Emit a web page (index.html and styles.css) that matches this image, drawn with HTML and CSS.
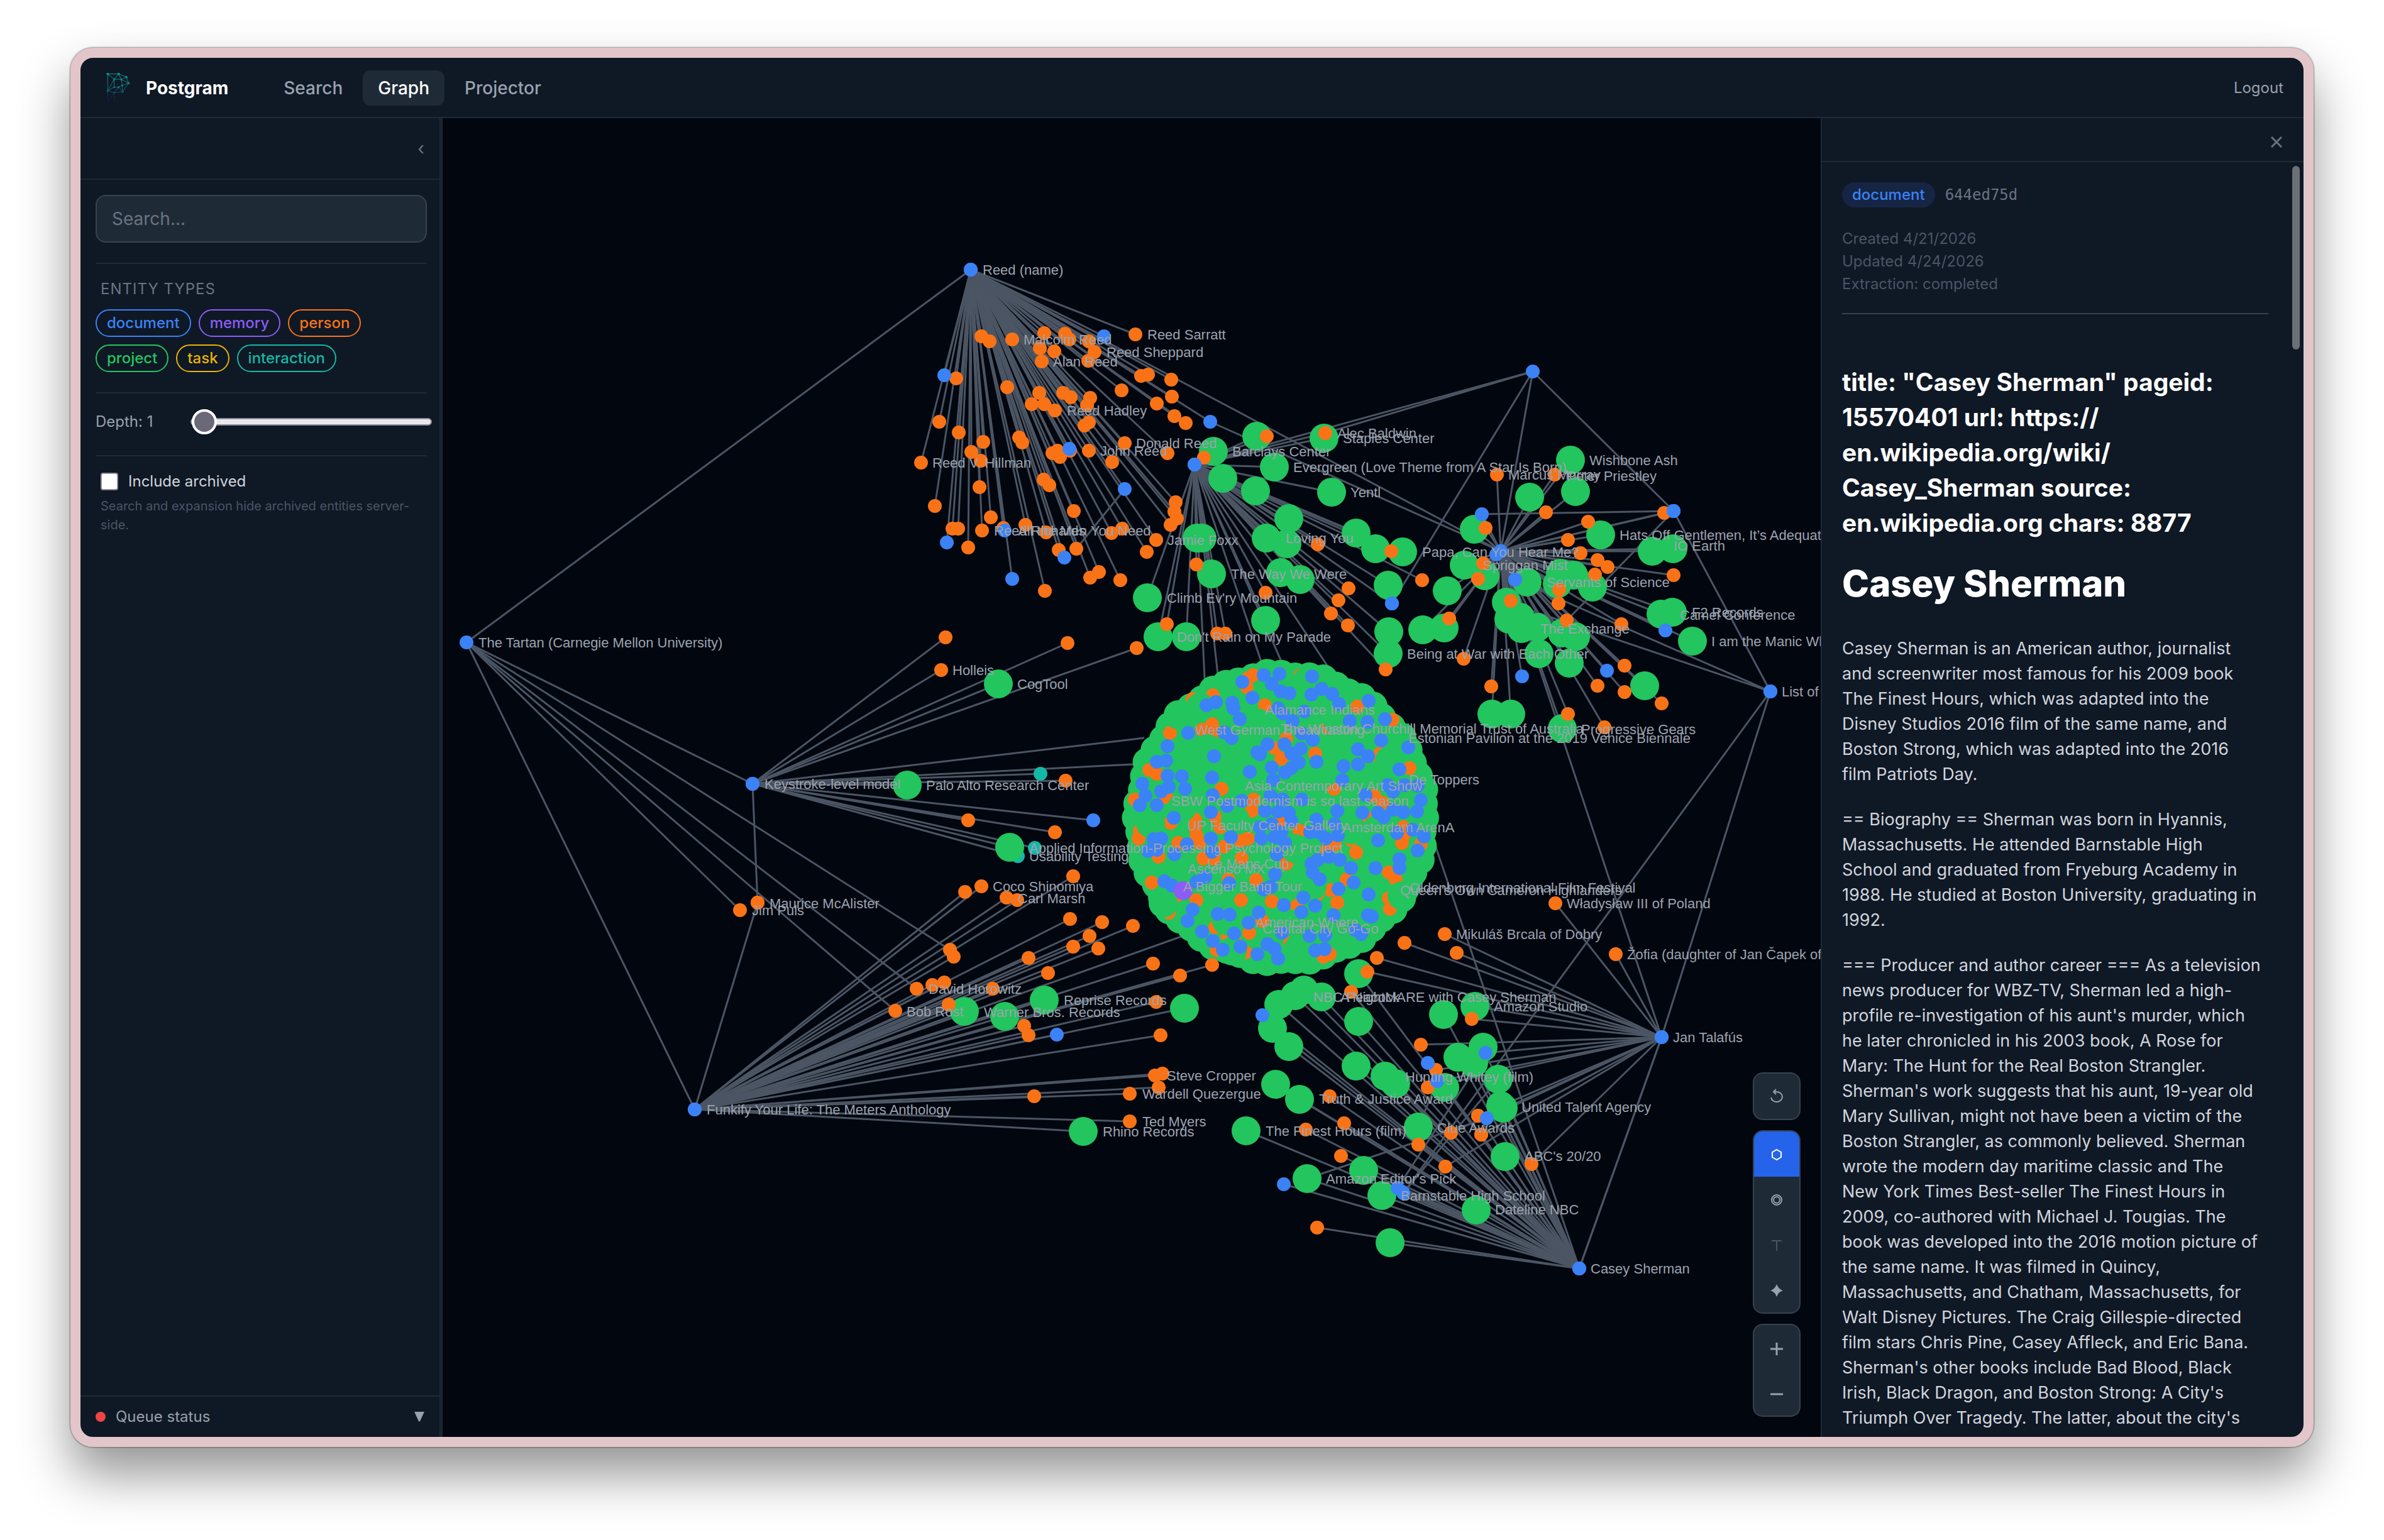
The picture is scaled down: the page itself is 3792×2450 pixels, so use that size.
FILE: index.html
```html
<!DOCTYPE html>
<html lang="en">
<head>
    <meta charset="UTF-8">
    <meta name="viewport" content="width=device-width, initial-scale=1.0">
    <title>Postgram - Graph</title>
    <link rel="stylesheet" href="styles.css">
</head>
<body>
    <div class="app">
        <header class="topbar">
            <a class="brand" href="#">
                <svg class="logo" viewBox="15 18 168 168" aria-hidden="true">
                    <defs>
                        <linearGradient id="fade" x1="0" y1="35" x2="0" y2="170" gradientUnits="userSpaceOnUse">
                            <stop offset="0" stop-color="#0f9488"/>
                            <stop offset="0.55" stop-color="#0e6f78"/>
                            <stop offset="0.75" stop-color="#0d2f56"/>
                            <stop offset="1" stop-color="#0f1b3d"/>
                        </linearGradient>
                    </defs>
                    <g fill="none" stroke="url(#fade)" stroke-width="3">
                        <path d="M49 35H101L138 50L148 79L120 120L80 124L49 115Z"/>
                        <path d="M49 35L80 60L101 35L114 62L138 50M114 62L148 79L118 90L120 120L101 98L80 98V60H114L118 90L101 98M80 98L49 115L80 60M101 98L80 124L82 166M49 115L50 170L80 124"/>
                    </g>
                    <g fill="url(#fade)">
                        <circle cx="49" cy="35" r="6"/><circle cx="101" cy="35" r="6"/>
                        <circle cx="138" cy="50" r="6"/><circle cx="148" cy="79" r="6"/>
                        <circle cx="114" cy="62" r="5"/><circle cx="80" cy="60" r="5"/>
                        <circle cx="118" cy="90" r="5"/><circle cx="101" cy="98" r="5"/>
                        <circle cx="80" cy="98" r="5"/><circle cx="120" cy="120" r="6"/>
                        <circle cx="80" cy="124" r="5"/><circle cx="49" cy="115" r="5"/>
                        <circle cx="50" cy="170" r="5"/><circle cx="82" cy="166" r="4"/>
                    </g>
                </svg>
                Postgram
            </a>
            <nav class="nav">
                <a href="#">Search</a>
                <a class="active" href="#">Graph</a>
                <a href="#">Projector</a>
            </nav>
            <button class="logout">Logout</button>
        </header>

        <div class="workspace">
            <aside class="sidebar">
                <div class="sidebar-head">
                    <button class="icon-btn" aria-label="Collapse sidebar">‹</button>
                </div>
                <div class="sidebar-body">
                    <input class="search" type="text" placeholder="Search..." aria-label="Search">

                    <section class="block">
                        <h2 class="block-title">Entity types</h2>
                        <div class="chips">
                            <button class="chip document">document</button>
                            <button class="chip memory">memory</button>
                            <button class="chip person">person</button>
                            <button class="chip project">project</button>
                            <button class="chip task">task</button>
                            <button class="chip interaction">interaction</button>
                        </div>
                    </section>

                    <section class="block depth">
                        <label for="depth">Depth: 1</label>
                        <input id="depth" type="range" min="1" max="5" value="1">
                    </section>

                    <section class="block">
                        <label class="check"><input type="checkbox"> Include archived</label>
                        <p class="hint">Search and expansion hide archived entities server-<br>side.</p>
                    </section>
                </div>
                <button class="queue">
                    <span class="queue-dot"></span>
                    Queue status
                    <svg class="queue-arrow" viewBox="0 0 16 16" aria-hidden="true"><path d="M1 0H15Q16 0 15.500 1L9 15Q8 16 7 15L.5 1Q0 0 1 0Z" fill="currentColor"/></svg>
                </button>
            </aside>

            <main class="canvas">
                <svg id="graph" class="graph" viewBox="704 188 2192 2098" preserveAspectRatio="xMidYMid slice"></svg>

                <div class="controls">
                    <div class="control-group">
                        <button aria-label="Reset layout">
                            <svg viewBox="0 0 20 24"><path d="M1 14A9 8 0 1 0 9 5H5M9 1L5 5L9 9" fill="none" stroke="currentColor" stroke-width="2"/></svg>
                        </button>
                    </div>
                    <div class="control-group">
                        <button class="active" aria-label="Force layout">
                            <svg viewBox="0 0 20 24"><path d="M10 5L17 9V17L10 21L3 17V9Z" fill="none" stroke="currentColor" stroke-width="2"/></svg>
                        </button>
                        <button aria-label="Circle layout">
                            <svg viewBox="0 0 20 24"><circle cx="10" cy="13" r="8" fill="none" stroke="currentColor" stroke-width="2"/><circle cx="10" cy="13" r="5" fill="none" stroke="currentColor" stroke-width="2"/></svg>
                        </button>
                        <button class="dim" aria-label="Tree layout">
                            <svg viewBox="0 0 20 24"><path d="M2 6H18M10 6V22" fill="none" stroke="currentColor" stroke-width="2"/></svg>
                        </button>
                        <button aria-label="Cluster layout">
                            <svg viewBox="0 0 20 24"><path d="M10 3Q13 11 20 13Q13 15 10 23Q7 15 0 13Q7 11 10 3Z" fill="currentColor"/></svg>
                        </button>
                    </div>
                    <div class="control-group">
                        <button aria-label="Zoom in">
                            <svg viewBox="0 0 20 24"><path d="M0 14H20M10 4V24" stroke="currentColor" stroke-width="3"/></svg>
                        </button>
                        <button aria-label="Zoom out">
                            <svg viewBox="0 0 20 24"><path d="M0 14H20" stroke="currentColor" stroke-width="3"/></svg>
                        </button>
                    </div>
                </div>
            </main>

            <aside class="detail">
                <div class="detail-head">
                    <button class="icon-btn" aria-label="Close">
                        <svg viewBox="0 0 18 18"><path d="M1 1L17 17M17 1L1 17" stroke="currentColor" stroke-width="3"/></svg>
                    </button>
                </div>
                <div class="detail-body">
                    <div class="entity">
                        <span class="badge">document</span>
                        <span class="entity-id">644ed75d</span>
                    </div>
                    <div class="meta">
                        <div>Created 4/21/2026</div>
                        <div>Updated 4/24/2026</div>
                        <div>Extraction: completed</div>
                    </div>
                    <article class="content">
                        <h2>title: "Casey Sherman" pageid:<br>15570401 url: https://<br>en.wikipedia.org/wiki/<br>Casey_Sherman source:<br>en.wikipedia.org chars: 8877</h2>
                        <h1>Casey Sherman</h1>
                        <p>Casey Sherman is an American author, journalist<br>
                        and screenwriter most famous for his 2009 book<br>
                        The Finest Hours, which was adapted into the<br>
                        Disney Studios 2016 film of the same name, and<br>
                        Boston Strong, which was adapted into the 2016<br>
                        film Patriots Day.</p>
                        <p>== Biography == Sherman was born in Hyannis,<br>
                        Massachusetts. He attended Barnstable High<br>
                        School and graduated from Fryeburg Academy in<br>
                        1988. He studied at Boston University, graduating in<br>
                        1992.</p>
                        <p>=== Producer and author career === As a television<br>
                        news producer for WBZ-TV, Sherman led a high-<br>
                        profile re-investigation of his aunt's murder, which<br>
                        he later chronicled in his 2003 book, A Rose for<br>
                        Mary: The Hunt for the Real Boston Strangler.<br>
                        Sherman's work suggests that his aunt, 19-year old<br>
                        Mary Sullivan, might not have been a victim of the<br>
                        Boston Strangler, as commonly believed. Sherman<br>
                        wrote the modern day maritime classic and The<br>
                        New York Times Best-seller The Finest Hours in<br>
                        2009, co-authored with Michael J. Tougias. The<br>
                        book was developed into the 2016 motion picture of<br>
                        the same name. It was filmed in Quincy,<br>
                        Massachusetts, and Chatham, Massachusetts, for<br>
                        Walt Disney Pictures. The Craig Gillespie-directed<br>
                        film stars Chris Pine, Casey Affleck, and Eric Bana.<br>
                        Sherman's other books include Bad Blood, Black<br>
                        Irish, Black Dragon, and Boston Strong: A City's<br>
                        Triumph Over Tragedy. The latter, about the city's</p>
                    </article>
                    <div class="scroll-thumb"></div>
                </div>
            </aside>
        </div>
    </div>

    <script src="graph.js"></script>
</body>
</html>
```
FILE: styles.css
```css
* {
    box-sizing: border-box;
}

body {
    margin: 0;
    height: 100vh;
    padding: 76px 112px 148px;
    background: #fff;
    font-family: Inter, "Noto Sans", sans-serif;
    font-size: 28px;
    line-height: 40px;
    color: #d1d5dc;
    overflow: hidden;
}

button,
input {
    font: inherit;
    color: inherit;
}

button {
    background: none;
    border: none;
    padding: 0;
    cursor: pointer;
}

a {
    color: inherit;
    text-decoration: none;
}

/* window frame */
.app {
    display: flex;
    flex-direction: column;
    height: 100%;
    border: 16px solid #e3c6ca;
    border-radius: 36px;
    background: #0f1825;
    overflow: hidden;
    box-shadow: 0 0 2px 1px rgba(0, 0, 0, 0.4), 0 44px 80px rgba(0, 0, 0, 0.42);
}

/* top bar */
.topbar {
    display: flex;
    align-items: center;
    flex: none;
    height: 96px;
    padding: 2px 32px 0;
    border-bottom: 2px solid #1f2a37;
}

.brand {
    display: flex;
    align-items: center;
    gap: 16px;
    font-weight: 700;
    color: #fff;
}

.logo {
    width: 56px;
    height: 56px;
}

.nav {
    display: flex;
    gap: 8px;
    flex: 1;
    margin-left: 64px;
}

.nav a {
    padding: 8px 24px;
    border-radius: 12px;
    font-weight: 500;
    color: #99a1af;
}

.nav a.active {
    background: #1f2a37;
    color: #fff;
}

.logout {
    font-size: 24px;
    color: #99a1af;
}

.workspace {
    display: flex;
    flex: 1;
    min-height: 0;
}

/* sidebar */
.sidebar {
    display: flex;
    flex-direction: column;
    flex: none;
    width: 576px;
    border-right: 5px double #1f2a37;
}

.sidebar-head {
    display: flex;
    align-items: center;
    justify-content: flex-end;
    flex: none;
    height: 98px;
    padding: 0 24px;
    border-bottom: 2px solid #1f2a37;
}

.icon-btn {
    display: flex;
    color: #6a7282;
}

.icon-btn svg {
    width: 18px;
    height: 18px;
}

.sidebar-body {
    flex: 1;
    padding: 24px 20px 24px 24px;
}

.search {
    display: block;
    width: 100%;
    height: 76px;
    padding: 0 24px;
    border: 2px solid #374250;
    border-radius: 16px;
    background: #1f2a37;
}

.search::placeholder {
    color: #6a7282;
    opacity: 1;
}

.block {
    margin-top: 32px;
    padding-top: 24px;
    border-top: 2px solid #1f2a37;
}

.block-title {
    margin: 0 8px 16px;
    font-size: 24px;
    line-height: 32px;
    font-weight: 400;
    letter-spacing: 1px;
    text-transform: uppercase;
    color: #6a7282;
}

.chips {
    display: flex;
    flex-wrap: wrap;
    gap: 12px;
}

.chip {
    height: 44px;
    padding: 0 16px;
    border: 2px solid currentColor;
    border-radius: 22px;
    font-size: 24px;
    font-weight: 500;
    line-height: 40px;
}

.chip.document { color: #3b82f6; }
.chip.memory { color: #8b5cf6; }
.chip.person { color: #f97316; }
.chip.project { color: #22c55e; }
.chip.task { color: #eab308; }
.chip.interaction { color: #14b8a6; }

.depth {
    display: flex;
    align-items: center;
    justify-content: space-between;
    height: 100px;
    padding: 0 0 8px;
    font-size: 24px;
    color: #99a1af;
}

.depth + .block {
    margin-top: 0;
}

.depth input {
    appearance: none;
    width: 384px;
    height: 40px;
    margin: 0 -8px 0 0;
    background: none;
}

.depth input::-webkit-slider-runnable-track {
    height: 12px;
    border: 2px solid #8f8d9c;
    border-radius: 6px;
    background: #e9e9ed;
}

.depth input::-webkit-slider-thumb {
    appearance: none;
    width: 40px;
    height: 40px;
    margin-top: -16px;
    border: 4px solid #fff;
    border-radius: 50%;
    background: #6b6878;
}

.check {
    display: flex;
    align-items: center;
    gap: 16px;
    margin: 0 8px;
    font-size: 24px;
    line-height: 32px;
}

.check input {
    appearance: none;
    width: 28px;
    height: 28px;
    margin: 0;
    border: 2px solid #8f8d9c;
    border-radius: 4px;
    background: #fff;
}

.hint {
    margin: 8px 8px 0;
    font-size: 20px;
    line-height: 30px;
    white-space: nowrap;
    color: #4a5565;
}

.queue {
    display: flex;
    align-items: center;
    gap: 16px;
    flex: none;
    height: 66px;
    padding: 0 24px;
    border-top: 2px solid #1f2a37;
    font-size: 24px;
    color: #99a1af;
}

.queue-dot {
    width: 16px;
    height: 16px;
    border-radius: 50%;
    background: #ef4444;
}

.queue-arrow {
    width: 16px;
    height: 16px;
    margin-left: auto;
}

/* graph */
.canvas {
    position: relative;
    flex: 1;
    min-width: 0;
    background: #02060f;
    overflow: hidden;
}

.graph {
    display: block;
    width: 100%;
    height: 100%;
}

.graph line {
    stroke: #4b5563;
    stroke-width: 3;
}

.graph .document { fill: #3b82f6; }
.graph .memory { fill: #8b5cf6; }
.graph .person { fill: #f97316; }
.graph .project { fill: #22c55e; }
.graph .interaction { fill: #14b8a6; }

.graph text {
    font-family: "Liberation Sans", Arial, sans-serif;
    font-size: 22px;
    fill: #9ca3af;
    dominant-baseline: central;
}

.controls {
    position: absolute;
    right: 32px;
    bottom: 32px;
    display: flex;
    flex-direction: column;
    gap: 16px;
}

.control-group {
    display: flex;
    flex-direction: column;
    width: 76px;
    border: 2px solid #374250;
    border-radius: 16px;
    background: #1f2a37;
    overflow: hidden;
}

.control-group button {
    display: flex;
    align-items: center;
    justify-content: center;
    height: 72px;
    color: #99a1af;
}

.control-group button.active {
    background: #2563eb;
    color: #fff;
}

.control-group button.dim {
    color: #4a5565;
}

.control-group svg {
    width: 20px;
    height: 24px;
}

/* detail panel */
.detail {
    display: flex;
    flex-direction: column;
    flex: none;
    width: 768px;
    border-left: 2px solid #1f2a37;
}

.detail-head {
    display: flex;
    align-items: center;
    justify-content: flex-end;
    flex: none;
    height: 70px;
    padding: 8px 34px 0;
    border-bottom: 2px solid #1f2a37;
}

.detail-body {
    position: relative;
    flex: 1;
    min-height: 0;
    padding: 32px 56px 0 32px;
    overflow: hidden;
}

.entity {
    display: flex;
    align-items: center;
    gap: 16px;
}

.badge {
    padding: 0 16px;
    border-radius: 20px;
    background: #162544;
    font-size: 24px;
    font-weight: 500;
    color: #3b82f6;
}

.entity-id {
    font-family: "DejaVu Sans Mono", monospace;
    font-size: 24px;
    color: #6a7282;
}

.meta {
    margin-top: 32px;
    padding-bottom: 28px;
    border-bottom: 2px solid #374250;
    font-size: 24px;
    line-height: 36px;
    color: #4a5565;
}

.content {
    white-space: nowrap;
    font-size: 27px;
}

.content h2 {
    margin: 80px 0 0;
    font-size: 39px;
    line-height: 56px;
    font-weight: 700;
    color: #fff;
}

.content h1 {
    margin: 32px 0 48px;
    font-size: 58px;
    line-height: 72px;
    font-weight: 800;
    color: #fff;
}

.content p {
    margin: 0 0 32px;
}

.scroll-thumb {
    position: absolute;
    top: 6px;
    right: 6px;
    width: 12px;
    height: 292px;
    border-radius: 6px;
    background: #6b6f78;
}
```
FILE: graph.js
```js
// Every group is a hub document plus the entities it links to.
// Node lists are "x y" pairs in graph space.
const groups = [
    {
        hub: [1544, 429],
        document: '1756 535, 1502 597, 1701 714, 1789 778, 1506 863, 1598 844, 1693 887, 1610 921, 1925 671',
        person: '1806 532, 1561 535, 1574 543, 1610 540, 1661 530, 1694 531, 1701 540, 1732 543, 1741 560, 1654 554, 1677 559, 1657 575, 1731 574, 1521 602, 1602 616, 1653 625, 1641 643, 1661 643, 1678 653, 1691 625, 1703 632, 1734 633, 1729 645, 1732 672, 1725 677, 1815 598, 1826 596, 1863 604, 1864 631, 1784 621, 1840 642, 1868 662, 1886 673, 1494 671, 1525 688, 1564 703, 1545 719, 1560 733, 1465 736, 1621 696, 1626 704, 1682 717, 1674 721, 1686 727, 1702 717, 1732 717, 1789 705, 1769 735, 1857 721, 1558 775, 1660 763, 1669 772, 1487 805, 1576 823, 1708 813, 1515 841, 1524 841, 1540 871, 1562 844, 1596 840, 1631 835, 1664 847, 1684 875, 1712 873, 1768 848, 1785 841, 1662 940, 1734 919, 1748 910, 1782 923, 1824 878, 1839 859, 1870 799, 1868 814, 1872 825, 1862 835',
        project: ''
    },
    {
        hub: [1900, 739],
        document: '2214 960',
        person: '1915 728, 2015 694, 2108 689, 1903 898, 1856 993, 2013 943, 1936 1008, 1949 1008, 2096 866, 2145 936, 2129 955, 2117 976, 2144 995, 2213 877, 2262 923, 2204 1065',
        project: '1930 718, 1999 694, 2106 697, 1945 761, 2027 743, 1997 781, 2118 783, 2050 825, 2014 856, 2047 865, 1904 856, 1912 856, 1927 913, 2037 911, 2068 922, 1825 951, 1842 1013, 1887 1013, 2013 987, 2157 848, 2188 873, 2231 878, 2208 931, 2209 1005, 2208 1040'
    },
    {
        hub: [2387, 877],
        document: '2380 882, 2357 818, 2410 922, 2421 1076, 2649 1003, 2556 1067, 2662 813',
        person: '2381 755, 2473 755, 2459 815, 2363 840, 2526 830, 2647 816, 2494 859, 2514 880, 2541 891, 2557 902, 2537 914, 2662 915, 2359 896, 2351 921, 2480 938, 2479 960, 2492 987, 2403 956, 2305 984, 2328 1048, 2372 1092, 2579 993, 2584 1059, 2541 1091, 2584 1101, 2643 1119, 2494 1136, 2552 1157',
        project: '2498 732, 2506 782, 2433 791, 2345 842, 2546 851, 2628 877, 2661 873, 2329 899, 2362 916, 2429 926, 2477 929, 2482 912, 2503 915, 2533 934, 2396 958, 2400 985, 2418 982, 2420 1000, 2445 998, 2485 1007, 2506 1013, 2302 940, 2263 1002, 2297 999, 2448 1040, 2496 1055, 2642 977, 2660 974, 2692 1020, 2616 1091, 2373 1136, 2403 1136, 2485 1159'
    },
    {
        hub: [1197, 1247],
        document: '1739 1305',
        person: '1504 1014, 1497 1066, 1698 1023, 1808 1031, 1695 1242, 1540 1305, 1678 1324, 1205 1436',
        interaction: '1655 1231, 1646 1349, 1619 1362',
        project: '1588 1088, 1443 1249, 1606 1348'
    },
    {
        hub: [1105, 1765],
        document: '1681 1646',
        person: '1707 1394, 1561 1410, 1535 1419, 1601 1428, 1618 1432, 1205 1436, 1702 1462, 1753 1467, 1733 1489, 1802 1473, 1707 1506, 1747 1509, 1636 1524, 1667 1548, 1579 1573, 1517 1522, 1483 1567, 1502 1563, 1509 1598, 1629 1632, 1636 1647, 1645 1744, 1797 1740, 1797 1784, 1834 1533, 1877 1552, 1928 1535, 1839 1594, 1846 1647, 1837 1711, 1849 1708, 1843 1730',
        project: '1534 1609, 1598 1617, 1661 1591, 1723 1800, 1884 1604'
    },
    {
        hub: [742, 1022],
        document: '1197 1247, 1105 1765, 1544 429',
        person: '1511 1511, 1458 1573, 1424 1608, 1177 1448'
    },
    {
        hub: [2643, 1650],
        document: '2363 1675, 2365 1779, 2286 1720, 2512 2018, 2387 877, 2816 1100',
        person: '2234 1500, 2298 1486, 2317 1516, 2570 1518, 2474 1437, 2190 1524, 2175 1546, 2341 1621, 2260 1662, 2284 1702, 2271 1730, 2351 1775, 2356 1805, 2308 1802, 2299 1856, 2436 1852',
        project: '2346 1601'
    },
    {
        hub: [2512, 2018],
        document: '2008 1615, 2271 1691, 2042 1884, 2223 1890, 2232 1898, 2643 1650',
        person: '2149 1578, 2115 1744, 2138 1787, 2077 1797, 2256 1821, 2133 1839, 2308 1802, 2351 1775, 2356 1805, 2095 1953',
        project: '2161 1549, 2074 1575, 2102 1586, 2060 1584, 2034 1598, 2024 1636, 2050 1665, 2161 1625, 2296 1614, 2319 1682, 2359 1666, 2344 1691, 2383 1717, 2298 1730, 2157 1696, 2203 1712, 2220 1724, 2029 1725, 2067 1749, 2387 1759, 2391 1763, 1982 1799, 2256 1793, 2169 1862, 2079 1875, 2198 1902, 2394 1840, 2348 1925, 2211 1977'
    },
    { hub: [2438, 591], document: '1900 739, 2387 877, 2214 960, 2662 813', person: '2108 689' },
    { hub: [2816, 1100], document: '2662 813, 2410 922, 2232 1898' }
];

const links = [
    [1544, 429, 2387, 877], [1925, 671, 2387, 877], [1712, 873, 1789, 778],
    [2357, 818, 2662, 813], [2662, 813, 2492, 987], [2079, 1875, 2365, 1779],
    [2223, 1890, 2363, 1675], [2232, 1898, 2383, 1717], [2241, 1222, 2512, 2018],
    [2816, 1100, 2396, 958],
    [1900, 739, 1917, 1100], [1900, 739, 1940, 1100], [1900, 739, 2012, 1070],
    [1900, 739, 2046, 1070], [1900, 739, 2125, 1080], [1197, 1247, 1820, 1174],
    [1197, 1247, 1820, 1215], [1105, 1765, 1890, 1486], [2256, 1793, 2286, 1720]
];

// the unexpanded ball in the middle
const ball = {
    cx: 2038,
    cy: 1301,
    r: 228,
    person: '1861 1166, 2012 1122, 1985 1079, 1993 1074, 1983 1093, 1929 1106, 1897 1112, 2159 1124, 1943 1255, 2122 1255, 1994 1272, 1991 1290, 1931 1163, 1912 1161, 2046 1175, 2027 1190, 2038 1207, 1959 1216, 1828 1225, 1840 1231, 2092 1199, 2242 1222, 1805 1272, 1855 1268, 1862 1309, 1813 1322, 1811 1334, 1901 1304, 1901 1316, 1903 1329, 1908 1341, 1874 1341, 1933 1300, 1941 1316, 1947 1347, 1973 1338, 1985 1334, 1975 1365, 1931 1366, 1914 1366, 1843 1363, 1832 1404, 1872 1424, 1903 1432, 1954 1399, 1998 1400, 1974 1432, 2023 1434, 2037 1306, 2067 1322, 2046 1374, 2111 1352, 2123 1343, 2149 1336, 2157 1356, 2186 1266, 2199 1277, 2172 1300, 2232 1316, 2234 1327, 2230 1341, 2260 1343, 2209 1388, 2220 1399, 2142 1399, 2117 1416, 2096 1422, 2127 1436, 2063 1441, 2209 1429, 2211 1446, 2008 1465, 1933 1475, 1952 1488, 1987 1484, 1966 1500, 1981 1515, 1935 1511, 1859 1452, 2052 1499, 2115 1518, 2105 1522, 2067 1474, 1928 1152, 2113 1157, 2142 1170, 2184 1216, 2195 1199, 2215 1145, 1864 1132, 2068 1075',
    // projects that sit above the people in the ball
    project: '1920 1191, 1882 1385, 1874 1137, 1909 1125, 2078 1085, 1983 1223, 1943 1211, 2172 1230, 2210 1210, 2146 1184, 1850 1437, 1951 1465, 2087 1410, 2230 1425, 2060 1470, 2065 1510, 1960 1513, 2128 1148, 1830 1310, 2005 1240, 2105 1230, 2000 1150, 1895 1215, 1965 1305, 2150 1320, 2190 1320, 2180 1405, 2060 1350, 1880 1285',
    document: '2010 1074, 2035 1072, 1976 1085, 2087 1076, 2023 1088, 2037 1100, 2051 1103, 1992 1110, 2086 1105, 2102 1096, 2119 1104, 2130 1120, 2177 1115, 1919 1122, 1934 1117, 1960 1118, 1962 1127, 1972 1144, 2033 1127, 2040 1135, 2075 1132, 2056 1147, 2147 1147, 2175 1149, 2203 1144, 1890 1166, 1857 1187, 1959 1174, 1947 1165, 1931 1203, 2016 1184, 2043 1184, 2069 1191, 2071 1167, 2088 1177, 2004 1200, 2000 1197, 2054 1199, 2066 1213, 2054 1222, 2044 1229, 2023 1221, 2094 1212, 2160 1192, 2176 1203, 2160 1216, 2137 1219, 2135 1241, 2197 1178, 2240 1189, 2226 1224, 1840 1212, 1855 1210, 1857 1234, 1880 1235, 1885 1255, 1817 1247, 1859 1252, 1847 1259, 1822 1266, 1813 1281, 1840 1281, 1928 1237, 1988 1228, 2025 1241, 1929 1265, 1952 1282, 1926 1292, 1975 1274, 2021 1266, 2040 1272, 2012 1290, 2033 1291, 2050 1293, 2071 1272, 2127 1290, 2172 1265, 2207 1249, 2216 1259, 2234 1249, 2255 1250, 2260 1273, 2254 1291, 2232 1292, 2216 1288, 2192 1293, 2201 1300, 2167 1293, 1867 1301, 2054 1306, 2023 1311, 2004 1316, 2038 1324, 2094 1304, 2084 1324, 2098 1324, 2109 1334, 2128 1329, 2123 1311, 1835 1335, 1847 1334, 1888 1343, 1926 1334, 1958 1332, 2006 1334, 2027 1332, 2044 1341, 2192 1337, 2222 1325, 2247 1320, 2265 1331, 2255 1353, 1868 1359, 1826 1354, 1840 1352, 1928 1355, 2031 1359, 2086 1374, 2096 1368, 2113 1363, 2131 1368, 2226 1367, 2226 1381, 2188 1381, 2149 1381, 2088 1388, 2099 1399, 2028 1391, 1852 1402, 1864 1409, 1903 1403, 1917 1395, 1955 1405, 2153 1404, 2021 1411, 2010 1415, 2129 1414, 2073 1428, 2177 1423, 2042 1440, 2092 1441, 2070 1451, 1897 1447, 1889 1465, 1937 1454, 1956 1455, 2002 1452, 2121 1456, 2176 1456, 2182 1458, 1986 1468, 1963 1485, 1912 1482, 1929 1497, 1945 1511, 1973 1506, 2083 1489, 2108 1488, 2155 1479, 2165 1486, 2039 1484, 2016 1502, 2027 1509, 2000 1518, 2033 1525, 2092 1512, 2107 1510'
};

const labels = [
    [1563, 429, 'Reed (name)'],
    [1825, 532, 'Reed Sarratt'],
    [1628, 540, 'Malcolm Reed'],
    [1760, 560, 'Reed Sheppard'],
    [1675, 575, 'Alan Reed'],
    [1697, 653, 'Reed Hadley'],
    [1807, 705, 'Donald Reed'],
    [1750, 717, 'John Reed'],
    [1483, 736, 'Reed V. Hillman'],
    [1581, 844, 'Reed Richards'],
    [1619, 844, 'All the Men You Need'],
    [1857, 859, 'Jamie Foxx'],
    [1960, 718, 'Barclays Center'],
    [2127, 689, 'Alec Baldwin'],
    [2136, 697, 'Staples Center'],
    [2057, 743, 'Evergreen (Love Theme from A Star Is Born)'],
    [2148, 783, 'Yentl'],
    [2045, 856, 'Loving You'],
    [1958, 913, 'The Way We Were'],
    [1856, 951, "Climb Ev'ry Mountain"],
    [1872, 1013, "Don't Rain on My Parade"],
    [2262, 878, 'Papa, Can You Hear Me?'],
    [2238, 1040, 'Being at War with Each Other'],
    [2528, 732, 'Wishbone Ash'],
    [2399, 755, 'Marcus Murray'],
    [2492, 757, 'Peter Priestley'],
    [2576, 851, 'Hats Off Gentlemen, It’s Adequate'],
    [2662, 868, 'IO Earth'],
    [2359, 899, 'Spriggan Mist'],
    [2460, 926, 'Servants of Science'],
    [2450, 1000, 'The Exchange'],
    [2672, 978, 'Camel Conference'],
    [2691, 974, 'F2 Records'],
    [2722, 1020, 'I am the Manic Whale'],
    [2834, 1100, 'List of songs'],
    [2515, 1160, 'Progressive Gears'],
    [761, 1022, 'The Tartan (Carnegie Mellon University)'],
    [1515, 1066, 'Holleis'],
    [1618, 1088, 'CogTool'],
    [1216, 1247, 'Keystroke-level model'],
    [1473, 1249, 'Palo Alto Research Center'],
    [1637, 1349, 'Applied Information-Processing Psychology Project'],
    [1637, 1362, 'Usability Testing'],
    [1224, 1437, 'Maurice McAlister'],
    [1196, 1448, 'Jim Puls'],
    [1579, 1410, 'Coco Shinomiya'],
    [1619, 1429, 'Carl Marsh'],
    [1477, 1573, 'David Horowitz'],
    [1442, 1609, 'Bob Rost'],
    [1565, 1610, 'Warner Bros. Records'],
    [1692, 1591, 'Reprise Records'],
    [1124, 1765, 'Funkify Your Life: The Meters Anthology'],
    [1856, 1711, 'Steve Cropper'],
    [1817, 1740, 'Wardell Quezergue'],
    [1817, 1784, 'Ted Myers'],
    [1754, 1800, 'Rhino Records'],
    [2012, 1129, 'Alamance Indians'],
    [1901, 1161, 'West German Broadcasting'],
    [2037, 1159, 'The Winston Churchill Memorial Trust of Australia'],
    [2240, 1174, 'Estonian Pavilion at the 2019 Venice Biennale'],
    [2241, 1240, 'De Toppers'],
    [1980, 1250, 'Asia Contemporary Art Show'],
    [1863, 1274, 'SBW Postmodernism is so last season'],
    [1888, 1313, 'UP Faculty Center Gallery'],
    [2135, 1316, 'Amsterdam ArenA'],
    [1920, 1374, 'Le Mans Cup'],
    [1889, 1382, 'Ascenso MX'],
    [1882, 1410, 'A Bigger Bang Tour'],
    [2242, 1412, 'Oldenburg International Film Festival'],
    [2227, 1416, "Queen's Own Cameron Highlanders"],
    [1997, 1467, 'American Where'],
    [2008, 1477, 'Capital City Go-Go'],
    [2492, 1437, 'Władysław III of Poland'],
    [2316, 1486, 'Mikuláš Brcala of Dobry'],
    [2588, 1518, 'Žofia (daughter of Jan Čapek of Sány)'],
    [2661, 1650, 'Jan Talafús'],
    [2089, 1586, 'NBC Peacock'],
    [2132, 1586, 'A NightMARE with Casey Sherman'],
    [2376, 1601, 'Amazon Studio'],
    [2235, 1713, 'Hunting Whitey (film)'],
    [2098, 1748, 'Truth & Justice Award'],
    [2420, 1761, 'United Talent Agency'],
    [2013, 1799, 'The Finest Hours (film)'],
    [2286, 1794, 'Clue Awards'],
    [2425, 1839, "ABC's 20/20"],
    [2109, 1875, "Amazon Editor's Pick"],
    [2228, 1902, 'Barnstable High School'],
    [2378, 1924, 'Dateline NBC'],
    [2530, 2018, 'Casey Sherman']
];

const radius = { document: 11, person: 11, interaction: 11, memory: 15, project: 23 };
const svg = document.getElementById('graph');

function add(tag, attrs, text) {
    const el = document.createElementNS('http://www.w3.org/2000/svg', tag);
    for (const key in attrs) {
        el.setAttribute(key, attrs[key]);
    }
    if (text) {
        el.textContent = text;
    }
    svg.appendChild(el);
}

function points(list) {
    return list ? list.split(', ').map(p => p.split(' ').map(Number)) : [];
}

function drawNodes(type, list) {
    list.forEach(([cx, cy]) => add('circle', { class: type, cx, cy, r: radius[type] }));
}

// place a point of the ball by distance from its centre and angle
function onBall(dist, angle) {
    return [ball.cx + dist * Math.cos(angle), ball.cy + dist * Math.sin(angle)];
}

// edges
groups.forEach(group => {
    const [x1, y1] = group.hub;
    Object.keys(radius).forEach(type => {
        points(group[type]).forEach(([x2, y2]) => add('line', { x1, y1, x2, y2 }));
    });
});
links.forEach(([x1, y1, x2, y2]) => add('line', { x1, y1, x2, y2 }));

// filler projects of the ball: a sunflower spiral inside, a packed rim outside
const filler = [];
for (let i = 0; i < 320; i++) {
    filler.push(onBall(ball.r * Math.sqrt(i / 320), i * 2.39996));
}
for (let i = 0; i < 64; i++) {
    filler.push(onBall(ball.r - 3 * Math.sin(i * 1.7), i * Math.PI / 32));
}
drawNodes('project', filler);
drawNodes('person', points(ball.person));
drawNodes('project', points(ball.project));
drawNodes('document', points(ball.document));
drawNodes('memory', [[1882, 1417]]);

['interaction', 'project', 'person', 'document'].forEach(type => {
    groups.forEach(group => drawNodes(type, points(group[type])));
});
drawNodes('document', groups.map(group => group.hub));

labels.forEach(([x, y, text]) => add('text', { x, y }, text));
```
